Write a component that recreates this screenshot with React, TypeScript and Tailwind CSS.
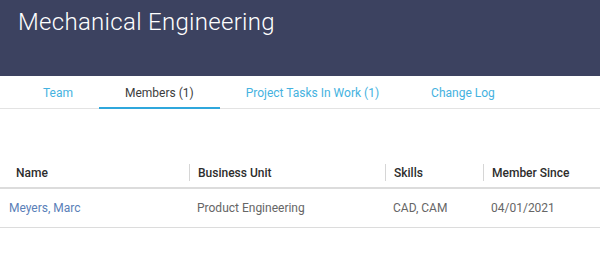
import React from 'react'

const tabs = ['Team', 'Members (1)', 'Project Tasks In Work (1)', 'Change Log']

const cols = ['Name', 'Business Unit', 'Skills', 'Member Since']

const App = () => {
  return (
    <div className="w-[600px] h-[260px] bg-white overflow-hidden" style={{ fontFamily: 'Roboto, "Noto Sans", sans-serif' }}>
      <div className="h-[76px] bg-[#3c4260] px-[18px] pt-[5px]">
        <h1 className="text-[24px] font-light text-white leading-[34px] tracking-[0.3px]">Mechanical Engineering</h1>
      </div>
      <div className="flex h-[33px] border-b border-[#e3e3e3] pl-[17px]">
        {tabs.map((t, i) => (
          <div
            key={t}
            className={
              'flex items-center pt-[3px] px-[26px] text-[12px] border-b-2 -mb-px ' +
              (i === 1 ? 'text-[#3c3c3c] border-[#2fa7dc]' : 'text-[#45b2e0] border-transparent')
            }
          >
            {t}
          </div>
        ))}
      </div>
      <div className="mt-[49px]">
        <div className="grid grid-cols-[189px_196px_98px_1fr] h-[31px] border-b-2 border-[#dcdcdc] text-[12px] font-medium text-[#2d2d2d]">
          {cols.map((c, i) => (
            <div key={c} className="flex items-center">
              {i > 0 && <span className="w-px h-[17px] bg-[#d6d6d6] mr-[8px]" />}
              <span className={i === 0 ? 'pl-4' : ''}>{c}</span>
            </div>
          ))}
        </div>
        <div className="grid grid-cols-[189px_196px_98px_1fr] h-[39px] border-b border-[#dcdcdc] text-[12px] text-[#666]">
          <div className="flex items-center pl-[9px] text-[#5a80b8]">Meyers, Marc</div>
          <div className="flex items-center pl-[8px]">Product Engineering</div>
          <div className="flex items-center pl-[8px]">CAD, CAM</div>
          <div className="flex items-center pl-[8px]">04/01/2021</div>
        </div>
      </div>
    </div>
  )
}

export default App
